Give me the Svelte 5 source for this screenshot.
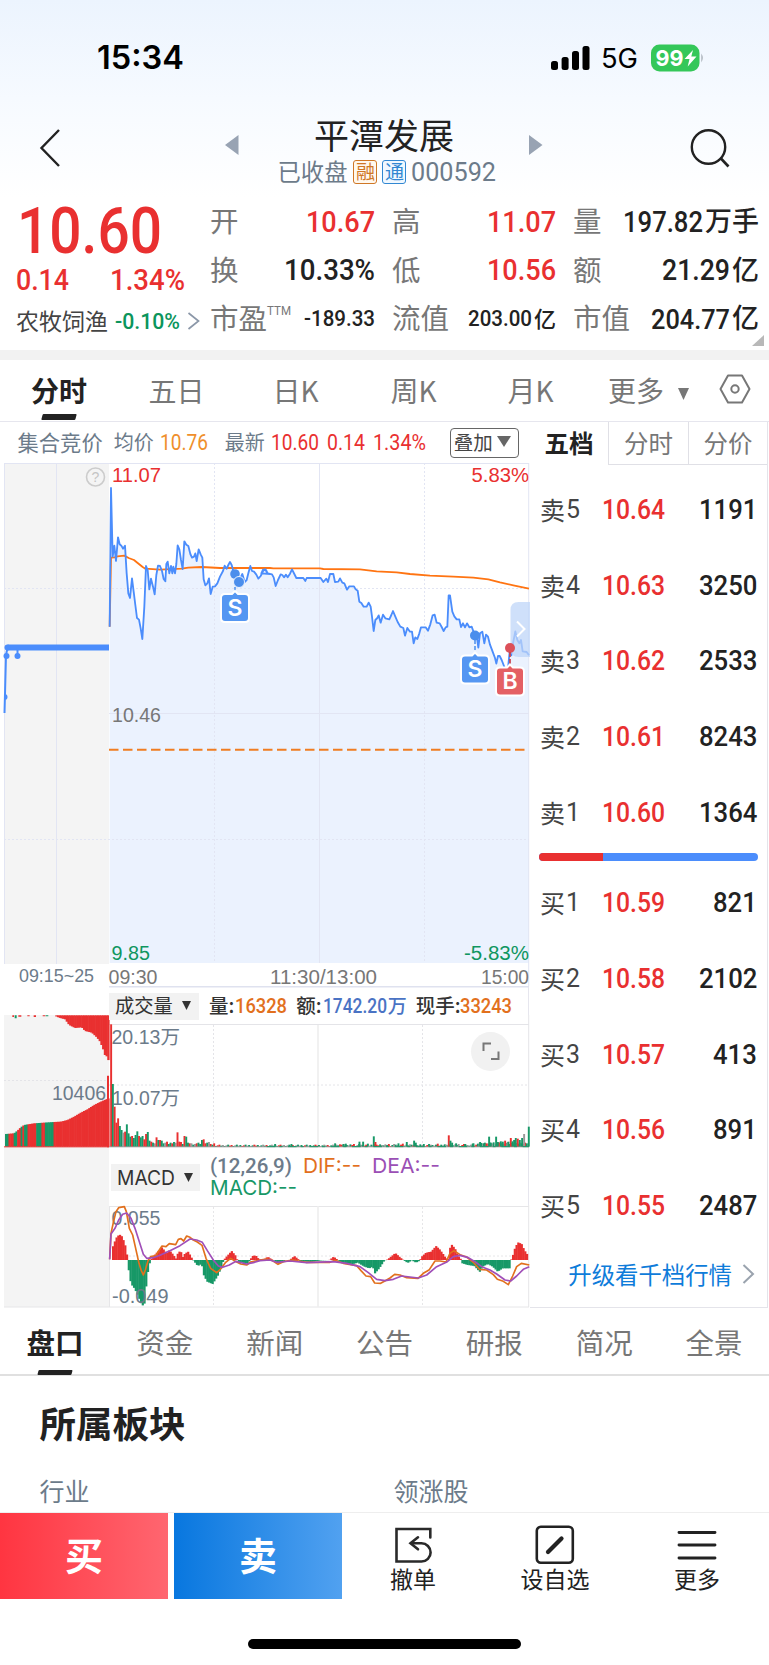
<script>
  const asks = [['卖5', '10.64', '1191'], ['卖4', '10.63', '3250'], ['卖3', '10.62', '2533'], ['卖2', '10.61', '8243'], ['卖1', '10.60', '1364']];
  const bids = [['买1', '10.59', '821'], ['买2', '10.58', '2102'], ['买3', '10.57', '413'], ['买4', '10.56', '891'], ['买5', '10.55', '2487']];
  const periods = ['分时', '五日', '日K', '周K', '月K'];
  const sections = ['盘口', '资金', '新闻', '公告', '研报', '简况', '全景'];

  // Chart series are kept in units of a third of a pixel.
  const right = (pts) => pts.map(([x, y]) => [x + 780, y]);
  const join = (pts) => pts.map((p) => p.join(',')).join(' ');

  const price = [
    [329, 500], [333, 84], [338, 290], [343, 257], [348, 303], [354, 232], [359, 253], [364, 257], [369, 266], [375, 257], [380, 340], [385, 400], [390, 414], [396, 355], [401, 395], [406, 435], [411, 474], [417, 479], [422, 505], [427, 537], [433, 440], [438, 318], [443, 330], [448, 388], [453, 356], [459, 380], [464, 403], [469, 345], [474, 317], [480, 318], [486, 333], [491, 357], [496, 364], [499, 312], [503, 305], [508, 340], [513, 318], [517, 340], [520, 320], [525, 340], [529, 312], [533, 256], [538, 268], [543, 300], [548, 327], [553, 244], [559, 254], [565, 258], [571, 282], [576, 293], [582, 290], [586, 280], [590, 303], [596, 268], [602, 283], [607, 293], [611, 358], [616, 376], [622, 370], [627, 355], [632, 402], [638, 380], [645, 379], [652, 370], [660, 350], [669, 333], [674, 317], [680, 326], [685, 315], [690, 306], [695, 315], [700, 333], [706, 342], [716, 365], [727, 342], [734, 366], [740, 360], [745, 340], [751, 318], [756, 333], [762, 335], [769, 344], [775, 356], [782, 348], [790, 332], [796, 328], [802, 340], [810, 342],
    ...right([[4, 340], [9, 329], [18, 330], [23, 340], [36, 343], [41, 352], [47, 378], [54, 360], [62, 343], [67, 345], [72, 352], [78, 344], [83, 352], [90, 341], [96, 328], [103, 342], [109, 354], [130, 354], [136, 363], [140, 354], [182, 354], [190, 366], [199, 356], [204, 366], [210, 342], [220, 342], [225, 366], [235, 365], [240, 355], [247, 368], [253, 370], [261, 389], [268, 379], [282, 379], [287, 388], [293, 392], [298, 425], [304, 429], [311, 440], [320, 440], [326, 428], [332, 440], [336, 470], [341, 513], [346, 480], [352, 474], [356, 466], [362, 488], [369, 464], [376, 475], [388, 478], [394, 465], [399, 453], [406, 470], [413, 486], [421, 500], [430, 504], [435, 527], [442, 504], [450, 515], [456, 515], [461, 550], [466, 532], [472, 537], [478, 520], [483, 502], [497, 502], [504, 512], [511, 493], [518, 466], [524, 464], [530, 488], [539, 490], [545, 501], [551, 513], [557, 502], [562, 500], [566, 406], [570, 406], [577, 455], [583, 469], [590, 478], [598, 478], [603, 501], [609, 490], [615, 502], [621, 490], [628, 502], [635, 500], [642, 519], [650, 525], [655, 563], [660, 520], [667, 515], [673, 550], [678, 524], [684, 530], [690, 554], [699, 578], [705, 594], [709, 611], [714, 588], [719, 588], [725, 600], [732, 618], [738, 640], [744, 625], [750, 565], [754, 586], [760, 545], [766, 514], [772, 540], [778, 550], [783, 540], [788, 574], [800, 576], [807, 586]])
  ];
  const average = [[329, 500], [333, 293], [344, 292], [352, 289], [373, 287], [386, 294], [402, 300], [413, 309], [428, 321], [436, 326], [480, 329], [545, 326], [565, 323], [605, 321], [660, 324], [810, 324],
    ...right([[40, 325], [180, 325], [190, 327], [300, 328], [350, 334], [410, 337], [450, 342], [510, 347], [580, 350], [640, 353], [685, 358], [720, 367], [760, 376], [807, 386]])];
  const area = join([[329, 1509], ...price, [1587, 1509]]);

  const macd = [[333, 33], [345, 66], [355, 77], [364, 70], [374, 40], [380, 4], [384, -40], [390, -72], [400, -85], [410, -105], [420, -130], [429, -141], [433, -110], [438, -50], [446, -10], [452, 5], [465, 20], [483, 38], [497, 20], [505, 30], [515, 18], [525, 4], [531, 22], [539, 28], [545, 8], [552, 20], [562, 25], [570, 10], [576, 0], [590, -18], [602, -12], [608, -45], [618, -65], [635, -72], [650, -48], [660, -25], [668, 0], [678, 12], [692, 27], [703, 14], [709, 0], [714, -7], [741, -10], [747, 0], [754, 12], [764, 14], [774, 2], [787, 0], [800, 10], [812, 2], [822, -3], [832, -12], [845, -6], [855, 0], [866, 0], [880, 12], [890, 4], [897, -3], [930, -6], [960, -1], [985, 0], [998, 10], [1008, 2], [1015, -5],
    ...right([[250, -10], [270, -14], [290, -8], [310, -20], [325, -25], [335, -20], [342, -40], [355, -25], [370, -2], [380, 2], [403, 21], [415, 10], [427, 0], [440, -9], [452, -1], [465, -8], [476, -2], [482, 10], [495, 22], [510, 25], [525, 42], [535, 33], [545, 20], [555, 5], [562, 3], [564, 30], [572, 46], [582, 35], [590, 15], [600, 2], [604, -10], [620, -15], [640, -18], [656, -36], [665, -20], [680, -12], [695, -20], [710, -35], [725, -25], [746, -25], [750, 0], [755, 12], [763, 40], [772, 53], [782, 48], [790, 30], [800, 15], [808, 5]])];
  function at(series, x) {
    for (let i = 1; i < series.length; i++) {
      const [x0, y0] = series[i - 1];
      const [x1, y1] = series[i];
      if (x <= x1) return y0 + ((y1 - y0) * (x - x0)) / (x1 - x0);
    }
    return 0;
  }
  const bars = [];
  for (let x = 336; x < 1583; x += 5.24) bars.push([x, at(macd, x)]);

  const dif = [[329, 328], [333, 250], [340, 218], [348, 185], [356, 173], [373, 170], [379, 185], [388, 235], [398, 255], [407, 295], [417, 340], [424, 362], [430, 375], [436, 360], [444, 332], [452, 320], [468, 317], [476, 303], [486, 288], [498, 290], [508, 281], [527, 284], [535, 268], [543, 266], [551, 273], [560, 258], [570, 262], [580, 270], [592, 276], [606, 286], [618, 325], [632, 355], [650, 368], [662, 357], [676, 338], [692, 325], [706, 334], [722, 342], [740, 345], [752, 336], [780, 330],
    ...right([[20, 327], [36, 331], [54, 343], [70, 335], [98, 330], [140, 337], [210, 337], [225, 331], [250, 340], [290, 347], [303, 362], [318, 378], [332, 380], [344, 399], [362, 400], [376, 392], [390, 384], [404, 373], [420, 375], [440, 383], [474, 385], [490, 370], [508, 359], [525, 333], [540, 333], [558, 336], [570, 310], [582, 302], [600, 314], [620, 321], [640, 337], [658, 358], [680, 360], [700, 374], [712, 388], [730, 394], [745, 404], [758, 378], [770, 350], [784, 340], [808, 345]])];
  const dea = [[329, 328], [333, 252], [345, 235], [356, 210], [368, 193], [380, 189], [393, 205], [405, 235], [418, 275], [430, 313], [440, 325], [460, 323], [480, 316], [510, 302], [540, 287], [570, 267], [590, 270], [607, 277], [622, 302], [640, 330], [655, 348], [668, 352], [688, 345], [708, 334], [740, 342], [760, 338], [780, 332],
    ...right([[30, 330], [50, 337], [90, 333], [140, 338], [220, 335], [260, 340], [300, 350], [325, 368], [350, 388], [375, 392], [400, 388], [425, 378], [475, 384], [500, 375], [530, 350], [562, 335], [580, 320], [600, 316], [625, 323], [645, 335], [665, 350], [690, 360], [710, 372], [735, 390], [752, 393], [770, 378], [790, 358], [808, 350]])];

  const opening = [367, 188, 120, 72, 85, 62, 50, 42, 45, 67, 40, 30, 32, 26, 35, 46, 32, 28, 32, 22, 38, 44, 18, 15, 12, 10, 28, 20, 20, 18, 10, 12, 15, 8, 12, 10, 14, 12, 43, 15, 14, 8, 32, 30, 12, 10, 10, 6, 8, 10, 12, 8, 20, 22, 10, 12, 14, 8, 6, 10];
  const tones = 'rgrrrggnrgggrgggrggrrggrgnrgrggnrggrgnrrrgrggrngnrgggrrgnrgr';
  const spikes = { 45: 8, 94: 8, 225: 10, 250: 8, 257: 9, 298: 15, 309: 15, 341: 31, 346: 14, 415: 10, 440: 14, 462: 18, 467: 12, 566: 34, 571: 18, 576: 12, 588: 10, 615: 8, 640: 10, 660: 14, 671: 10, 687: 30, 692: 12, 708: 30, 713: 14, 722: 16, 728: 15, 735: 18, 745: 15, 752: 26, 757: 16, 762: 20, 767: 26, 773: 24, 779: 20, 786: 26, 792: 38 };
  const fills = { r: '#e93030', g: '#179867', n: '#999' };
  const volume = opening.map((h, i) => [333 + i * 5.24, h, fills[tones[i]]]);
  for (let i = 60; i < 239; i++) {
    const x = 333 + i * 5.24;
    const late = x > 1430 ? 5 : 0;
    const key = ['g', 'r', 'g', 'g', 'n', 'r', 'g'][(i * i + 3 * i) % 7];
    volume.push([x, 2 + ((i * 37) % 5) + (x > 1000 ? (i * 13) % 4 : 0) + late, fills[key]]);
  }
  for (const k in spikes) volume.push([+k + 780, spikes[k], k == 566 || k == 735 || k == 752 || k == 346 || k == 773 ? fills.r : k == 792 ? fills.n : fills.g]);
  volume.push([1586, 60, fills.g]);

  const bidTop = [[165, 258], [180, 264], [195, 268], [207, 285], [225, 294], [245, 292], [255, 303], [275, 308], [290, 322], [300, 335], [310, 360], [315, 377], [322, 380], [328, 402]];
  const bidBottom = [[15, 612], [40, 610], [50, 602], [60, 592], [70, 585], [100, 580], [130, 578], [160, 576], [180, 575], [200, 570], [220, 560], [240, 548], [260, 538], [280, 525], [300, 515], [328, 503]];
  const auction = [];
  for (let x = 15; x < 322; x += 5.2) {
    const green = [[15, 22], [42, 50], [62, 66], [72, 80], [105, 120], [135, 157]].some(([a, b]) => x >= a - 1 && x <= b);
    auction.push([x, at(bidBottom, x + 1), 650, green ? fills.g : fills.r]);
    if (x > 163) auction.push([x, 256, at(bidTop, x + 3), fills.r]);
  }
</script>

{#snippet num(text, w, size, color, weight = 500, font = 'Roboto')}
  <svg class="num" width={w} height={size} style:color={color}>
    <text x="0" y={size * 0.856} textLength={w} lengthAdjust="spacingAndGlyphs" font-size={size} font-weight={weight} font-family="{font}, 'Noto Sans CJK SC', sans-serif" fill="currentColor">{text}</text>
  </svg>
{/snippet}

{#snippet fit(text, x, y, w, size, color)}
  <text {x} {y} textLength={w} lengthAdjust="spacingAndGlyphs" font-size={size} fill={color}>{text}</text>
{/snippet}

<main class="screen">
  <header>
    <div class="status">
      <div class="clock">{@render num('15:34', 87, 32.5, '#000', 600, 'Inter')}</div>
      <div class="signals">
        <svg width="39" height="26" viewBox="0 0 39 26"><rect x="0" y="16" width="7" height="9" rx="2.5" /><rect x="10.6" y="12" width="7" height="13" rx="2.5" /><rect x="21" y="6" width="7" height="19" rx="2.5" /><rect x="31.5" y="1" width="7" height="24" rx="2.5" /></svg>
        {@render num('5G', 37, 27, '#000', 400, 'Inter')}
        <svg width="54" height="28" viewBox="0 0 54 28"><rect x="0" y="0.5" width="48.5" height="27" rx="8.5" fill="#34c759" /><path d="M50.3 9.5q3 4.5 0 9z" fill="#a9b0b8" /><text x="4.5" y="21.6" textLength="28" lengthAdjust="spacingAndGlyphs" font-family="Inter, sans-serif" font-weight="700" font-size="22" fill="#fff">99</text><path d="M42 6 33.5 15h5l-1.8 7.5L45.5 12.6h-5.2z" fill="#fff" /></svg>
      </div>
    </div>
    <nav class="title-bar">
      <svg class="back" width="22" height="40" viewBox="0 0 22 40"><path d="M20 2 2.5 20 20 38" fill="none" stroke="#222" stroke-width="2.4" /></svg>
      <svg class="prev" width="14" height="20"><path d="M13.5 0v20L0 10z" fill="#98a3b3" /></svg>
      <div class="stock">
        <h1>平潭发展</h1>
        <div class="sub"><span>已收盘</span><b class="tag orange">融</b><b class="tag blue">通</b>{@render num('000592', 85, 25.5, '#6c7b8a', 400)}</div>
      </div>
      <svg class="next" width="14" height="20"><path d="M0 0v20L13.5 10z" fill="#98a3b3" /></svg>
      <svg class="search" width="42" height="42" viewBox="0 0 42 42"><circle cx="18.5" cy="20" r="16.7" fill="none" stroke="#222" stroke-width="2.4" /><path d="m30.5 31 8 8.5" stroke="#222" stroke-width="2.6" /></svg>
    </nav>
  </header>

  <section class="quote">
    <div class="last">
      <div class="big">{@render num('10.60', 145, 64, '#e93030', 500)}</div>
      <div class="chg">{@render num('0.14', 53, 29.5, '#e93030')}{@render num('1.34%', 75, 29.5, '#e93030')}</div>
      <div class="industry"><span>农牧饲渔</span>{@render num('-0.10%', 65, 22.5, '#0b955c')}<svg width="13" height="18"><path d="M1.5 1 11.5 9l-10 8" fill="none" stroke="#8b97a8" stroke-width="1.7" /></svg></div>
    </div>
    <dl>
      <div><dt>开</dt><dd>{@render num('10.67', 69, 29.5, '#e93030')}</dd></div>
      <div><dt>高</dt><dd>{@render num('11.07', 69, 29.5, '#e93030')}</dd></div>
      <div><dt>量</dt><dd>{@render num('197.82', 80, 29.5, '#222')}<span>万手</span></dd></div>
      <div><dt>换</dt><dd>{@render num('10.33%', 91, 29.5, '#222')}</dd></div>
      <div><dt>低</dt><dd>{@render num('10.56', 69, 29.5, '#e93030')}</dd></div>
      <div><dt>额</dt><dd>{@render num('21.29', 68, 29.5, '#222')}<span>亿</span></dd></div>
      <div><dt>市盈<sup>{@render num('TTM', 24, 13, '#777', 400)}</sup></dt><dd>{@render num('-189.33', 71, 22.5, '#222')}</dd></div>
      <div><dt>流值</dt><dd>{@render num('203.00', 64, 22.5, '#222')}<span class="small">亿</span></dd></div>
      <div><dt>市值</dt><dd>{@render num('204.77', 79, 27.5, '#222')}<span>亿</span></dd></div>
    </dl>
    <svg class="corner" width="12" height="11"><path d="M12 0v11H0z" fill="#b8b8b8" /></svg>
  </section>

  <nav class="periods">
    {#each periods as p, i}<span class:active={i === 0}>{p}</span>{/each}
    <span class="more">更多<svg width="11" height="12"><path d="M0 0h11L5.5 12z" fill="#777" /></svg></span>
    <svg class="hex" width="32" height="30" viewBox="0 0 32 30"><path d="M9 1.5h14L30.5 15 23 28.5H9L1.5 15z" fill="none" stroke="#777" stroke-width="2" stroke-linejoin="round" /><circle cx="16" cy="15" r="3.7" fill="none" stroke="#777" stroke-width="2" /></svg>
  </nav>

  <section class="market">
    <div class="charts">
      <div class="summary">
        <span class="auction">集合竞价</span><span>均价</span>{@render num('10.76', 48, 21.5, '#ef8f2c', 400)}
        <span class="newest">最新</span>{@render num('10.60', 48, 21.5, '#e93030', 400)}{@render num('0.14', 38, 21.5, '#e93030', 400)}{@render num('1.34%', 53, 21.5, '#e93030', 400)}
        <button>叠加<svg width="14" height="11"><path d="M0 0h14L7 11z" fill="#666" /></svg></button>
      </div>

      <svg class="plot" width="530" height="524" viewBox="0 463 530 524">
        <rect x="4" y="463" width="105" height="501" fill="#f4f4f4" />
        <g transform="translate(0 460) scale(.33333)"><polygon points={area} fill="#ebf2fe" /></g>
        <g stroke="#e2e5f3" fill="none"><path d="M4 463.5H529M4.5 463V964M56.5 463V964M319.5 463V963M109 713.5H529M528.7 463V986" /><path d="M4 588.5H529M4 839.5H529M214.5 463V963M424.5 463V963" stroke-dasharray="2 2" /><path d="M109 986.7H529" stroke="#dfe2ef" stroke-width="1.5" /></g>
        <g transform="translate(0 460) scale(.33333)" fill="none" stroke-linejoin="round">
          <polyline points={join(average)} stroke="#ff7412" stroke-width="5.5" />
          <polyline points={join(price)} stroke="#4b8dfc" stroke-width="5.5" />
        </g>
        <path d="M109 749.700H529" stroke="#f07d22" stroke-width="2" stroke-dasharray="9.500 4.500" />
        <path d="M7.500 647.500H109" stroke="#4b8dfc" stroke-width="6" /><path d="M4.500 713 6 655 7.500 648M17.500 647V655" fill="none" stroke="#4b8dfc" stroke-width="2" />
        <g fill="#4b8dfc"><circle cx="7.500" cy="647.500" r="3" /><circle cx="6.500" cy="656" r="3" /><circle cx="17.500" cy="656" r="3" /><path d="M4.500 694a3 3 0 0 1 0 6z" /></g>
        <circle cx="95.500" cy="477" r="9" fill="none" stroke="#ccc" stroke-width="1.600" />
        <text x="95.500" y="482" text-anchor="middle" font-size="14" fill="#c4c4c4">?</text>
        <path d="M530 602H518.500q-8 0-8 8V649q0 8 8 8H530z" fill="#bfd5f8" fill-opacity=".75" /><path d="m517 621.500 7.500 7.500-7.500 7.500" fill="none" stroke="#fff" stroke-width="2" />
        <g fill="#4b8eec"><circle cx="235" cy="574" r="4.800" /><circle cx="239" cy="582" r="5.500" stroke="#ebf2fe" /><circle cx="475" cy="635.500" r="5" /></g>
        <circle cx="510" cy="648" r="5" fill="#dc5059" />
        <path d="M235 587V594M475 640V655" stroke="#4b8eec" stroke-width="1.500" stroke-dasharray="4 2" /><path d="M510 652V667" stroke="#c9404a" stroke-width="1.700" stroke-dasharray="5 2" />
        <g stroke="#fff" stroke-width="2">
          <path d="M225 594h7l3-3 3 3h7q4 0 4 4v20q0 4-4 4h-20q-4 0-4-4v-20q0-4 4-4z" fill="#5597f2" /><path d="M465 655.500h7l3-3 3 3h7q4 0 4 4v20q0 4-4 4h-20q-4 0-4-4v-20q0-4 4-4z" fill="#5597f2" /><path d="M500 667.500h7l3-3 3 3h7q4 0 4 4v20q0 4-4 4h-20q-4 0-4-4v-20q0-4 4-4z" fill="#e46064" />
        </g>
        <g font-size="23" font-weight="600" font-family="Inter" fill="#fff" text-anchor="middle"><text x="235" y="615.500">S</text><text x="475" y="677">S</text><text x="510" y="689">B</text></g>
        {@render fit('11.07', 112, 482, 49, 20, '#e93030')}
        {@render fit('5.83%', 471.5, 482, 57.5, 20, '#e93030')}
        {@render fit('10.46', 112, 721.5, 49, 20, '#777')}
        {@render fit('9.85', 111.5, 960, 38.5, 20, '#0f9660')}
        {@render fit('-5.83%', 464, 960, 65, 20, '#0f9660')}
        {@render fit('09:15~25', 19, 982, 75, 18, '#6c7b8a')}
        {@render fit('09:30', 108.5, 983.5, 49, 19.5, '#777')}
        {@render fit('11:30/13:00', 270, 983.5, 107, 19.5, '#777')}
        {@render fit('15:00', 481, 983.5, 48, 19.5, '#777')}
      </svg>

      <div class="indicator volume-head">
        <span class="select">成交量<svg width="9" height="9"><path d="M0 0h9L4.500 9z" fill="#333" /></svg></span>
        <span class="key">量:</span>{@render num('16328', 52, 20, '#e2701d')}
        <span class="key second">额:</span>{@render num('1742.20', 64, 20, '#4a73c4')}<span class="wan">万</span>
        <span class="key third">现手:</span>{@render num('33243', 52, 20, '#e2701d')}
      </div>

      <svg class="plot vol" width="530" height="133" viewBox="0 1015 530 133">
        <rect x="4" y="1015" width="105" height="133" fill="#f4f4f4" />
        <g stroke="#e4e4e8" fill="none"><path d="M109 1024.500H529M528.700 1015V1148" /><path d="M318 1025V1147" stroke="#eee" stroke-width="1.600" /><path d="M4 1080.500H108M109 1085H529M213.500 1025V1147M422.500 1025V1147" stroke-dasharray="2 2" /></g>
        <g transform="translate(0 930) scale(.33333)">
          {#each auction as [x, a, b, f]}<rect {x} y={a} width="7" height={b - a} fill={f} />{/each}
          <path d="M321 437h6v215h-6zM37 256h5v5h-5zM55 256h9v4h-9zM82 256h7v3h-7zM101 256h7v5h-7zM128 256h8v3h-8z" fill="#e93030" /><path d="M44 256h6v9h-6zM137 256h8v3h-8z" fill="#179867" />
          {#each volume as [x, h, f]}<rect x={x - 2.5} y={650 - h} width="5.8" height={h} fill={f} />{/each}
          <path d="M12 650.500H327" stroke="#e93030" stroke-width="3" /><path d="M327 650.500H1587" stroke="#777" stroke-width="2" /><path d="M800 650H1587" stroke="#179867" stroke-width="3" stroke-dasharray="26 12 9 17" />
        </g>
        {@render fit('20.13万', 111.5, 1044, 68.5, 19.5, '#6c7b8a')}
        {@render fit('10.07万', 112, 1105, 68, 19.5, '#6c7b8a')}
        {@render fit('10406', 52, 1100, 54, 19.5, '#6c7b8a')}
        <circle cx="490.500" cy="1051.500" r="19.500" fill="#f1f1f1" /><path d="M483.500 1051v-7.500h7.500M491 1059h7.500v-7.500" fill="none" stroke="#777" stroke-width="2" />
      </svg>

      <div class="indicator macd-head">
        <i class="pad"></i>
        <span class="select">{@render num('MACD', 58, 20.5, '#333', 400, 'Inter')}<svg width="9" height="9"><path d="M0 0h9L4.500 9z" fill="#333" /></svg></span>
        <div class="params">
          <div>{@render num('(12,26,9)', 82, 21, '#6c7b8a', 500)}{@render num('DIF:--', 58, 20.5, '#e2701d', 400, 'Inter')}{@render num('DEA:--', 68, 20.5, '#9b4fb5', 400, 'Inter')}</div>
          {@render num('MACD:--', 87, 20.5, '#179867', 400, 'Inter')}
        </div>
      </div>

      <svg class="plot" width="530" height="103" viewBox="0 1205 530 103">
        <rect x="4" y="1205" width="105" height="102" fill="#f4f4f4" />
        <g stroke="#e6e6e8" fill="none"><path d="M109 1206.500H529M4 1307H529M528.700 1205V1307M109.500 1206V1307" /><path d="M318 1206V1307" stroke="#eee" stroke-width="1.600" /><path d="M109 1256H529M213.500 1207V1306M422.500 1207V1306" stroke-dasharray="2 2" /></g>
        <g transform="translate(0 1150) scale(.33333)">
          {#each bars as [x, h]}<rect {x} y={h > 0 ? 330 - h : 330} width="6.6" height={Math.abs(h)} fill={h > 0 ? '#e93030' : '#179867'} />{/each}
        </g>
        {@render fit('0.055', 111.5, 1225, 49, 19.5, '#6c7b8a')}
        {@render fit('-0.049', 112, 1303, 56.5, 19.5, '#6c7b8a')}
        <g transform="translate(0 1150) scale(.33333)" fill="none" stroke-linejoin="round" stroke-width="5"><polyline points={join(dif)} stroke="#e2701d" /><polyline points={join(dea)} stroke="#a04fb8" /></g>
      </svg>
    </div>

    <aside class="book">
      <div class="book-tabs"><b>五档</b><span>分时</span><span>分价</span></div>
      <div class="levels">
        {#each asks as [l, p, q]}<div class="level"><span>{l[0]}{@render num(l[1], 14, 26, '#444', 400)}</span>{@render num(p, 63, 28, '#e93030')}<div class="qty">{@render num(q, q.length * 14.6, 28, '#222')}</div></div>{/each}
      </div>
      <div class="ratio"><i></i></div>
      <div class="levels">
        {#each bids as [l, p, q]}<div class="level"><span>{l[0]}{@render num(l[1], 14, 26, '#444', 400)}</span>{@render num(p, 63, 28, '#e93030')}<div class="qty">{@render num(q, q.length * 14.6, 28, '#222')}</div></div>{/each}
      </div>
      <div class="upgrade">升级看千档行情<svg width="13" height="20"><path d="M1.500 1 11 10l-9.500 9" fill="none" stroke="#9aa3ae" stroke-width="2" /></svg></div>
    </aside>
  </section>

  <nav class="sections">
    {#each sections as s, i}<span class:active={i === 0}>{s}</span>{/each}
  </nav>

  <section class="sector">
    <h2>所属板块</h2>
    <div class="cols"><span>行业</span><span>领涨股</span></div>
  </section>

  <footer>
    <button class="buy">买</button>
    <button class="sell">卖</button>
    <div class="action"><svg width="40" height="40" viewBox="0 0 40 40" fill="none" stroke="#2a2a2a" stroke-width="2.600" stroke-linecap="round"><path d="M37.300 12.500V4H3.500V36.500H28.500A9 9 0 0 0 28.500 18.300H18.500" /><path d="m25 12.300-7.500 6 7.500 6" /></svg><span>撤单</span></div>
    <div class="action"><svg width="40" height="40" viewBox="0 0 40 40" fill="none" stroke="#222" stroke-width="2.600"><rect x="1.800" y="1.800" width="36" height="36" rx="4" /><path d="M13 27 26.500 13.500" stroke-width="4.200" stroke-linecap="round" /></svg><span>设自选</span></div>
    <div class="action"><svg width="40" height="40" viewBox="0 0 40 40" stroke="#222" stroke-width="2.900" stroke-linecap="round"><path d="M2 7.500h36M2 20h36M2 33h36" /></svg><span>更多</span></div>
  </footer>
  <div class="home"><i></i></div>
</main>

<style>
  :global(body) { margin: 0; background: #fff; }
  .screen { width: 769px; height: 1665px; overflow: hidden; background: #fff; color: #222; font-family: 'Noto Sans CJK SC', sans-serif; }
  .screen * { box-sizing: border-box; }
  svg { display: block; flex: none; overflow: visible; }
  span, b, h1, h2, dt, button { white-space: nowrap; }
  button { font-family: inherit; padding: 0; }
  header { height: 197px; background: linear-gradient(#ecf4fe, #f6faff 50%, #fff); }
  .status { height: 115px; display: flex; justify-content: space-between; align-items: center; padding: 0 64px 0 97px; }
  .signals { display: flex; align-items: center; }
  .signals > :global(svg:nth-child(2)) { margin: 1px 13px 0 11px; }
  .title-bar { display: grid; grid-template-columns: 39px 186px 14px 290px 160px 80px; align-items: start; }
  .back { grid-column: 2; margin-top: 13px; }
  .prev, .next { margin-top: 20px; }
  .stock { display: flex; flex-direction: column; align-items: center; }
  .next { grid-column: 5; }
  .search { margin: 12px 0 0 1px; }
  h1 { margin: 0; font-weight: 400; font-size: 35px; line-height: 38px; }
  .sub { display: flex; align-items: center; height: 30px; margin-top: 4px; font-size: 23.3px; line-height: 28px; color: #6c7b8a; padding-left: 6px; }
  .sub span { margin: -2px 6px 0 0; }
  .tag { width: 24px; height: 24px; margin-right: 5px; border: 1px solid; border-radius: 3px; font-size: 19px; line-height: 20px; text-align: center; font-weight: 400; }
  .orange { color: #cf7726; background: #fff8ee; }
  .blue { color: #3187d2; background: #f0f8ff; }
  .quote { position: relative; height: 153px; display: flex; }
  .last { width: 210px; padding-left: 16px; flex: none; }
  .big { padding: 1px 0 0 1px; }
  .chg { display: flex; gap: 41px; margin-top: 3px; }
  .industry { display: flex; align-items: center; margin-top: 13.5px; height: 26px; gap: 7px; font-size: 23px; line-height: 26px; color: #444; }
  .industry span { margin-top: -3px; }
  dl { margin: 0; display: grid; grid-template: repeat(3, 48.7px) / 165px 164px 186px; column-gap: 17px; }
  dl div { display: flex; justify-content: space-between; align-items: center; }
  dt { font-size: 28.5px; line-height: 40px; color: #777; display: flex; margin-top: -3px; }
  dt sup { margin: 7px 0 0; line-height: 1; }
  dd { margin: 0; display: flex; align-items: center; }
  dd span { font-size: 27px; line-height: 30px; font-weight: 500; margin: -3px 0 0 2px; }
  dd .small { font-size: 22px; }
  .corner { position: absolute; right: 5px; bottom: 4px; }
  .periods { height: 72px; border-top: 10px solid #f2f2f2; border-bottom: 1px solid #e6e6ee; display: grid; grid-template-columns: 118px 117px 121px 115px 119px 120px 59px; align-items: center; font-size: 28px; color: #777; }
  .periods span { text-align: center; line-height: 60px; margin-top: -2px; }
  .periods .active, .sections .active { position: relative; color: #222; font-weight: 700; }
  .periods .active::after, .sections .active::after { content: ''; position: absolute; left: 42px; bottom: 0; width: 34px; height: 6px; background: #222; transform: skewX(-15deg); border-radius: 1px; }
  .periods .more { display: flex; align-items: center; justify-content: flex-start; gap: 14px; padding-left: 18px; }
  .more svg { margin-top: 8px; }
  .hex { margin: -3px 0 0 9px; }
  .market { display: flex; height: 886px; }
  .charts { width: 530px; flex: none; }
  .summary { height: 41px; display: flex; align-items: center; padding-left: 17.5px; font-size: 20px; line-height: 26px; color: #6c7b8a; }
  .summary span { margin: -2px 6px 0 0; }
  .summary .auction { font-size: 21.3px; margin-right: 11px; }
  .summary .newest { margin-left: 17px; }
  .summary > :global(svg + svg) { margin-left: 8px; }
  .summary button { margin-left: 24px; width: 69px; height: 30px; display: flex; align-items: center; gap: 4px; padding: 0 0 2px 3px; background: #fff; border: 1.5px solid #666; border-radius: 4px; font-size: 19.5px; color: #444; line-height: 26px; }
  .plot { font-family: 'Liberation Sans', 'Noto Sans CJK SC', sans-serif; }
  .indicator { position: relative; display: flex; align-items: center; }
  .select { display: flex; align-items: center; justify-content: space-between; height: 27px; background: #f2f2f2; color: #333; }
  .volume-head { width: 420px; height: 28px; margin-left: 109px; border-right: 1px solid #e6e6ee; padding-top: 10px; font-size: 20px; line-height: 26px; }
  .volume-head .select { width: 90px; padding: 0 8px 2px 6px; font-size: 19.3px; }
  .key { margin: -2px 1px 0 10px; font-weight: 500; color: #333; font-size: 19.5px; }
  .key.second { margin-left: 9px; }
  .key.third { margin-left: 9px; margin-right: 0; }
  .wan { color: #4a73c4; font-size: 19px; margin: -2px 0 0 1px; font-weight: 500; }
  .macd-head { height: 57px; padding-top: 1px; border-right: 1px solid #e6e6ee; width: 529px; }
  .macd-head .pad { align-self: stretch; width: 105px; margin: -1px 0 0 4px; background: #f4f4f4; }
  .macd-head .select { width: 89px; margin-left: 2px; padding: 0 7px 0 6px; }
  .params { margin: -1px 0 0 10px; display: grid; gap: 1px; }
  .params div { display: flex; gap: 11px; }
  .book { width: 238px; border-right: 1px solid #e4e4ea; border-bottom: 1px solid #e4e4ea; }
  .book-tabs { display: grid; grid-template-columns: 78px 80px 79px; height: 43px; font-size: 24.5px; line-height: 41px; text-align: center; color: #777; }
  .book-tabs b { color: #222; font-weight: 700; }
  .book-tabs span { border-left: 1px solid #e0e0e6; border-bottom: 1px solid #e0e0e6; }
  .levels { padding: 6px 10px 0 10px; }
  .level { height: 75.7px; display: grid; grid-template-columns: 62px 64px 1fr; align-items: center; }
  .level span { display: flex; align-items: center; font-size: 25px; line-height: 34px; color: #444; gap: 1px; }
  .level .qty { display: flex; justify-content: flex-end; }
  .ratio { margin: 4px 9px 0; height: 8px; border-radius: 4px; background: #4b8dfc; overflow: hidden; }
  .ratio i { display: block; width: 64px; height: 8px; background: #e93030; }
  .ratio + .levels { padding-top: 3px; }
  .upgrade { display: flex; align-items: center; justify-content: flex-end; gap: 10px; padding-right: 12px; margin-top: 16px; font-size: 23.4px; line-height: 30px; color: #0e7cda; }
  .sections { height: 68px; border-bottom: 2px solid #e0e0e0; display: grid; grid-template-columns: repeat(7, 109.86px); font-size: 28.5px; color: #777; }
  .sections span { text-align: center; line-height: 60px; padding-top: 4px; height: 67px; }
  .sections .active::after { left: 38px; bottom: 0; height: 5px; }
  .sector { height: 136px; padding: 25px 39.500px 0; }
  h2 { margin: 0; font-size: 36.5px; line-height: 44px; }
  .cols { display: grid; grid-template-columns: 354px 1fr; margin-top: 27px; font-size: 25px; line-height: 36px; color: #6c7b8a; }
  footer { height: 87px; border-top: 1px solid #eee; display: grid; grid-template-columns: 168px 168px 142px 142px 142px; }
  footer button { border: 0; color: #fff; font-size: 38px; font-weight: 700; line-height: 80px; height: 86px; padding-bottom: 4px; }
  .buy { background: linear-gradient(90deg, #ff3541, #ff6670); }
  .sell { margin-left: 6px; margin-right: -6px; background: linear-gradient(90deg, #0877df, #51a1f0); }
  .action { display: flex; flex-direction: column; align-items: center; padding: 12px 0 0 12px; font-size: 23px; line-height: 26px; }
  .home { display: flex; justify-content: center; padding-top: 40px; }
  .home i { width: 273px; height: 10px; border-radius: 5px; background: #000; }
</style>
